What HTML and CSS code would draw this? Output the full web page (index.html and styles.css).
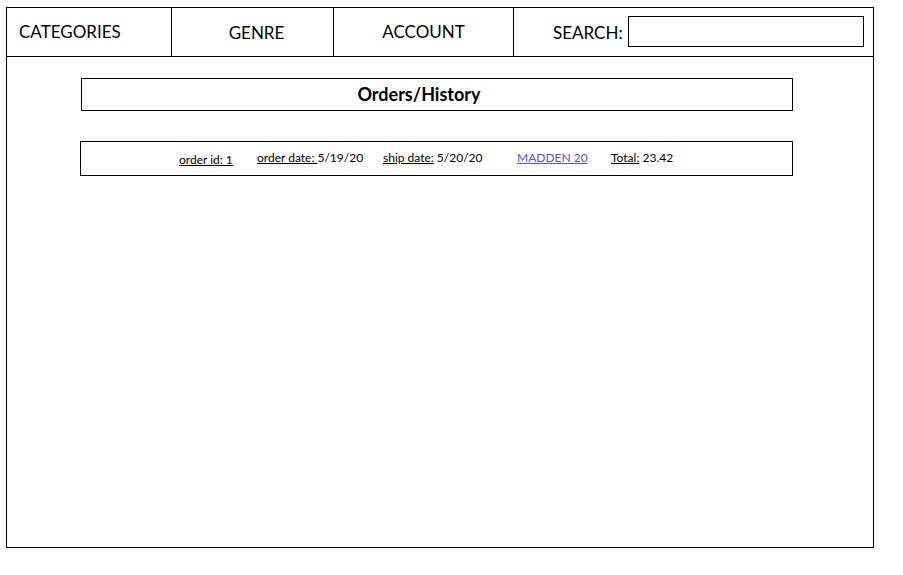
FILE: index.html
```html
<!DOCTYPE html>
<html>
<head>
<meta charset="utf-8">
<link rel="stylesheet" href="styles.css">
</head>
<body>
<div class="frame">
  <nav class="nav">
    <div class="cell cell-cat">CATEGORIES</div>
    <div class="cell cell-genre">GENRE</div>
    <div class="cell cell-account">ACCOUNT</div>
    <div class="cell cell-search"><span class="search-label">SEARCH:</span><div class="search-box"></div></div>
  </nav>
  <main class="content">
    <div class="title-box">Orders/History</div>
    <div class="order-row">
      <span class="item item-id"><u>order id: 1</u></span>
      <span class="item"><u>order date: </u>5/19/20</span>
      <span class="item"><u>ship date:</u> 5/20/20</span>
      <span class="item"><a class="game-link" href="#">MADDEN 20</a></span>
      <span class="item"><u>Total:</u> 23.42</span>
    </div>
  </main>
</div>
</body>
</html>
```

FILE: styles.css
```css
* { box-sizing: border-box; }
html, body { margin: 0; padding: 0; background: #fff; }
body {
  font-family: Lato, "Open Sans", sans-serif;
  color: #000;
}
.frame {
  margin: 7px 0 0 6px;
  width: 868px;
  height: 541px;
  border: 1px solid #000;
  display: flex;
  flex-direction: column;
}
.nav {
  display: flex;
  height: 49px;
  border-bottom: 1px solid #000;
  font-size: 17px;
}
.cell {
  display: flex;
  align-items: center;
  border-right: 1px solid #000;
}
.cell-cat { width: 165px; padding-left: 12px; padding-bottom: 2px; }
.cell-genre { width: 162px; justify-content: center; padding-left: 8px; padding-top: 1px; }
.cell-account { width: 180px; justify-content: center; padding-bottom: 2px; }
.cell-search { flex: 1; border-right: none; padding-left: 39px; }
.search-label { margin-right: 5px; }
.search-box {
  width: 236px;
  height: 31px;
  border: 1px solid #000;
  margin-bottom: 2px;
}
.content {
  flex: 1;
  padding-left: 73px;
}
.title-box {
  margin-top: 21px;
  margin-left: 1px;
  width: 712px;
  height: 33px;
  border: 1px solid #000;
  display: flex;
  align-items: center;
  justify-content: center;
  font-weight: bold;
  font-size: 18px;
  padding-right: 36px;
  padding-bottom: 1px;
}
.order-row {
  margin-top: 30px;
  width: 713px;
  height: 35px;
  border: 1px solid #000;
  display: grid;
  grid-template-columns: 78px 126px 134px 94px auto;
  align-items: center;
  padding-left: 98px;
  font-size: 12px;
}
.item { white-space: nowrap; padding-bottom: 3px; }
.item-id { padding-top: 1px; padding-bottom: 0; }
.game-link { color: #5b4fd8; }
```
